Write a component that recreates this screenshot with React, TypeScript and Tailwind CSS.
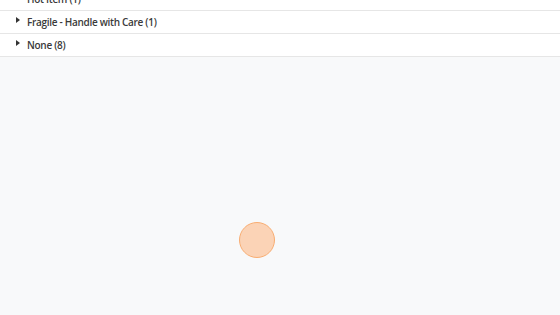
import React from "react";

const rows = ["Hot Item (1)", "Fragile - Handle with Care (1)", "None (8)"];

function Row({ label }: { label: string }) {
    return (
        <div className="h-[23px] border-b border-[#e6e6e6] flex items-center pl-[16px] bg-white">
            <span className="w-0 h-0 border-y-[3.5px] border-y-transparent border-l-[4px] border-l-[#333] -mt-[5px]" />
            <span className="ml-[7px] mt-[1px] text-[10px] tracking-[-0.3px] text-[#3a3a3a] font-semibold">{label}</span>
        </div>
    );
}

export default function App() {
    return (
        <div
            className="relative w-[560px] h-[315px] overflow-hidden bg-[#f8f9fa]"
            style={{ fontFamily: "'Open Sans', 'Noto Sans', sans-serif" }}
        >
            <div className="-mt-[12px]">
                {rows.map((r) => (
                    <Row key={r} label={r} />
                ))}
            </div>

            {/* click indicator */}
            <div className="absolute left-[239px] top-[222px] w-[36px] h-[36px] rounded-full bg-[#fbd3b6] border-[1.5px] border-[#f8ad72]" />
        </div>
    );
}
